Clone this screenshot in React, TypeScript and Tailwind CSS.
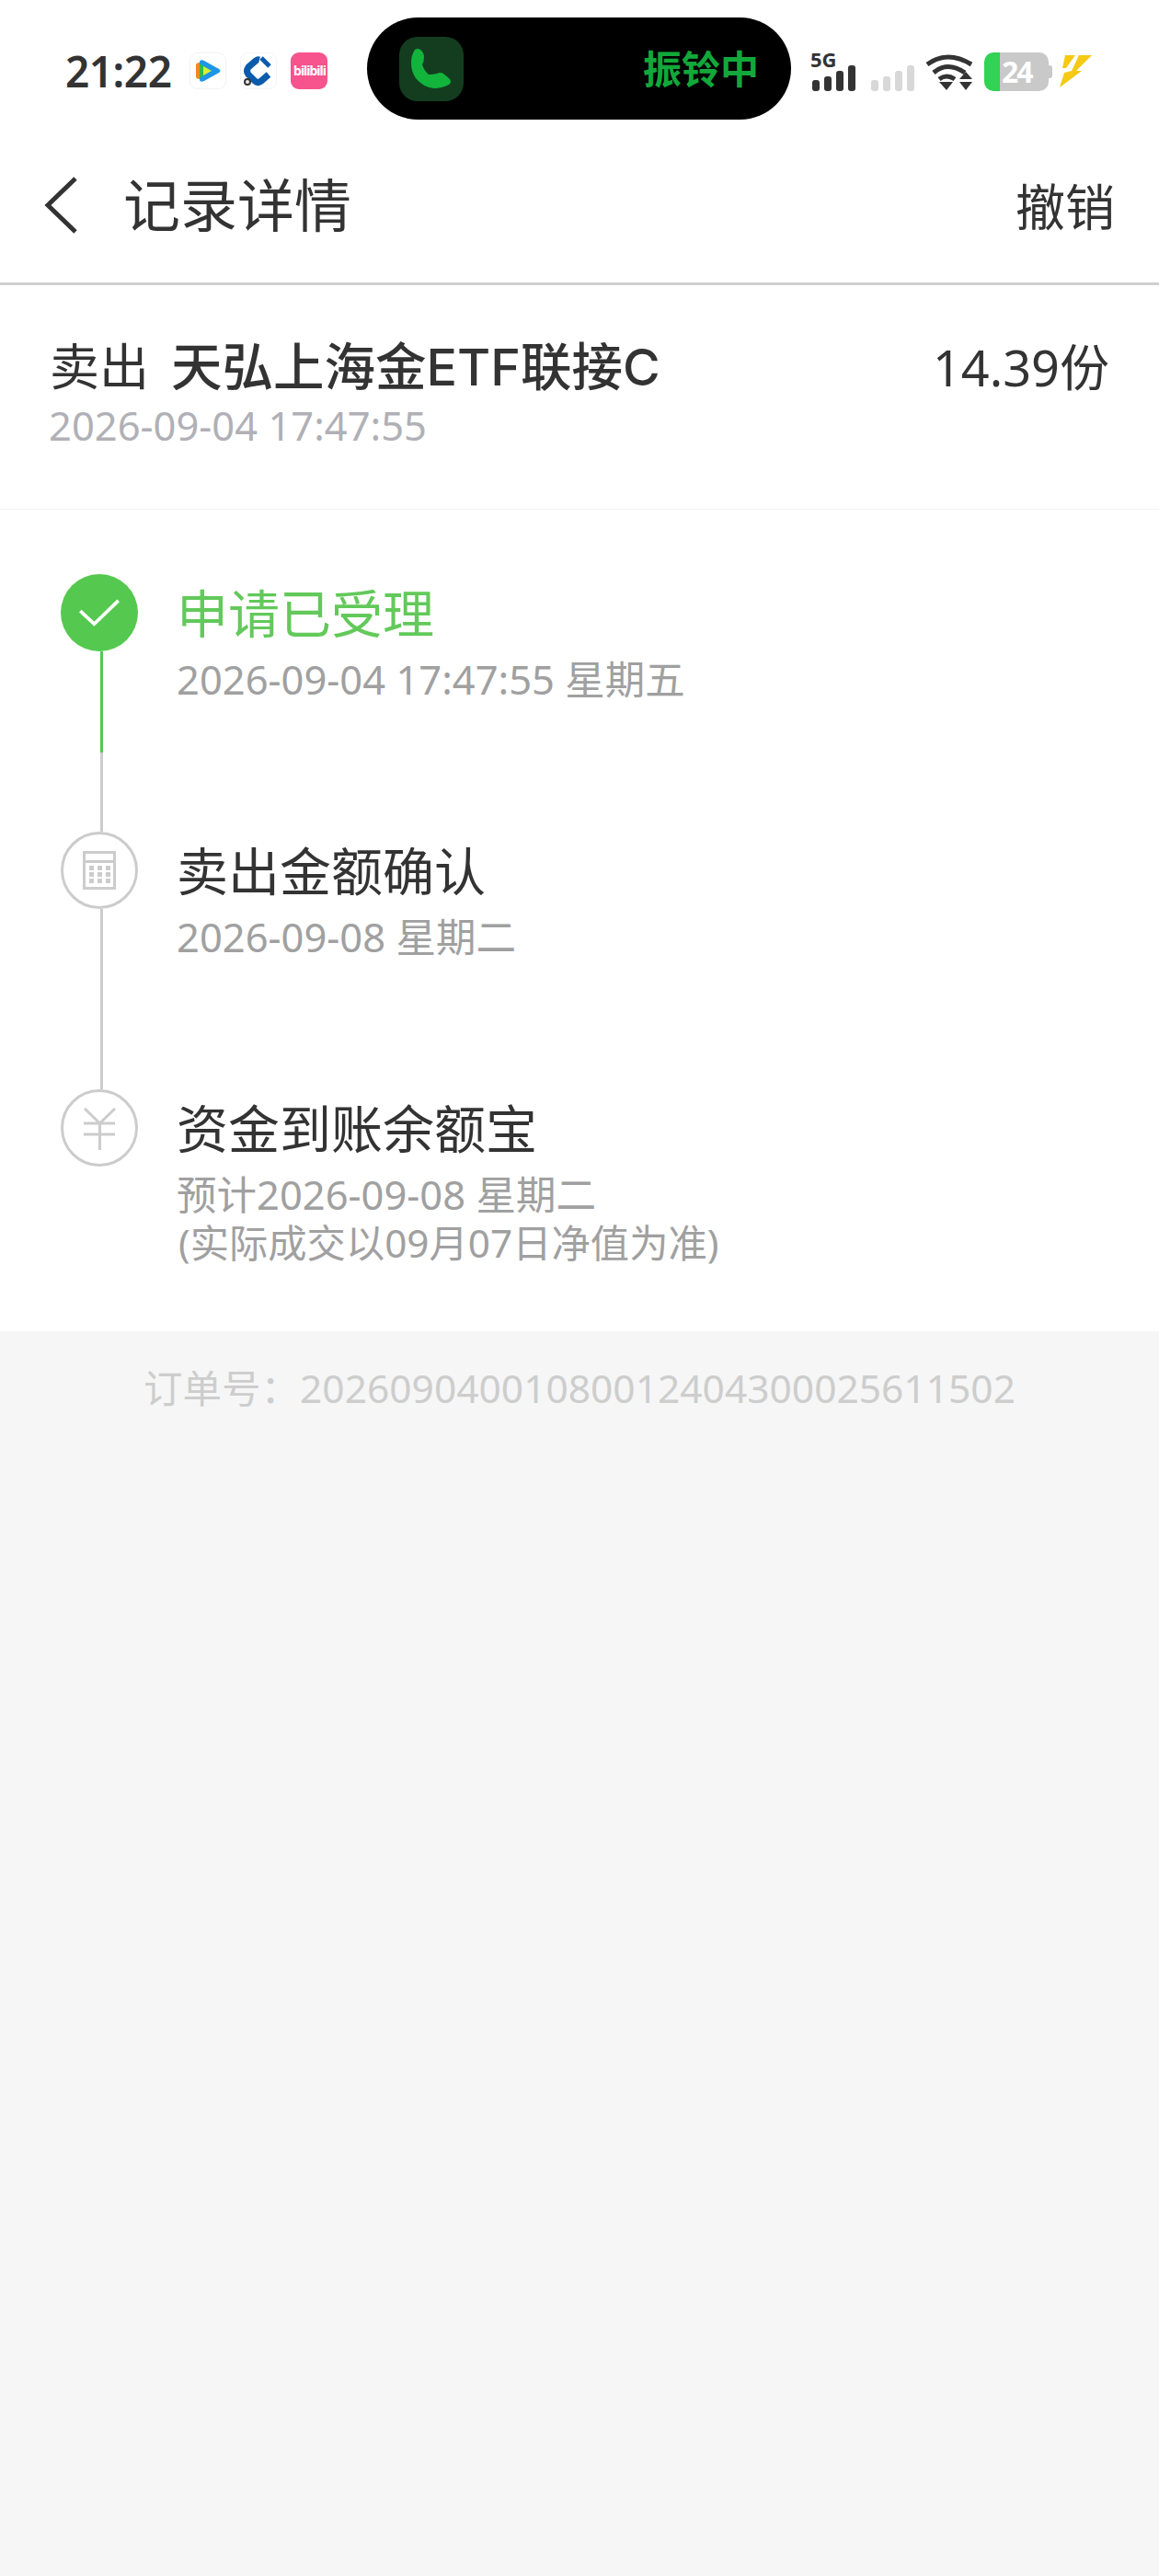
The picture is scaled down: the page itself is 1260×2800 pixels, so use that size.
import React from 'react';

const font = { fontFamily: '"Noto Sans", "Noto Sans CJK SC", sans-serif' };

const TencentVideo = () => (
  <svg viewBox="0 0 40 40" className="w-[40px] h-[40px]">
    <rect x="0.5" y="0.5" width="39" height="39" rx="8" fill="#fff" stroke="#f2f2f2" />
    <path d="M7 14 Q7 11 11 11 L16 11 L16 29 L11 29 Q7 29 7 26 Z" fill="#f08a1c" />
    <path d="M11 11 Q11 7 16 9 L32 18 Q35 20 32 22 L16 31 Q11 33 11 29 Z" fill="#1e96e8" />
    <path d="M11 12 L23 20 L11 28 Z" fill="#35b84b" />
    <path d="M15 15 L24 20 L15 25 Z" fill="#d8ee3c" />
  </svg>
);

const CcbLogo = () => (
  <svg viewBox="0 0 40 40" className="w-[40px] h-[40px]">
    <rect x="0.5" y="0.5" width="39" height="39" rx="8" fill="#fff" stroke="#f4f4f4" />
    <path d="M31 24 L23 31 Q19.5 34 16 31 L9 24 Q6 20 9 16 L17 9 Q19 7.5 21 8" fill="none" stroke="#0a5bab" strokeWidth="7" />
    <path d="M23 6 L32 15" fill="none" stroke="#0a5bab" strokeWidth="5" />
    <circle cx="8" cy="32" r="3" fill="#eee" stroke="#333" strokeWidth="2" />
  </svg>
);

const Bilibili = () => (
  <div className="w-[40px] h-[40px] rounded-[9px] bg-[#f7538d] flex items-center justify-center text-white text-[14px] font-bold leading-none tracking-[-1px]">
    bilibili
  </div>
);

const SignalBars = ({ color }: { color: string }) => (
  <svg viewBox="0 0 48 28" className="w-[48px] h-[28px]" fill={color}>
    <rect x="0" y="16" width="8" height="12" rx="3" />
    <rect x="13" y="12" width="8" height="16" rx="3" />
    <rect x="26" y="6" width="8" height="22" rx="3" />
    <rect x="39" y="0" width="8" height="28" rx="3" />
  </svg>
);

const Wifi = () => (
  <svg viewBox="0 0 53 41" className="w-[53px] h-[41px]" fill="none" stroke="#333" strokeWidth="5">
    <path d="M2 13 Q24 -3 50 13" />
    <path d="M9 22 Q24 9 43 22" />
    <path d="M15 29 Q23 23 32 29" />
    <path d="M15 32 L30 32 L23 41 Z" fill="#333" stroke="none" />
    <path d="M44 21 L51 29 L37 29 Z" fill="#333" stroke="none" />
    <path d="M37 32 L51 32 L44 41 Z" fill="#333" stroke="none" />
  </svg>
);

const Battery = () => (
  <div className="flex items-center">
    <div className="w-[70px] h-[42px] flex">
      <div className="w-[17px] bg-[#32d254] rounded-l-[10px]" />
      <div className="flex-1 bg-[#c9c9c9] rounded-r-[10px] text-left pl-[2px] text-white text-[32px] font-bold leading-[42px] tracking-[-2px]">24</div>
    </div>
    <div className="w-[4px] h-[14px] bg-[#c9c9c9] rounded-r-[3px]" />
  </div>
);

const Bolt = () => (
  <svg viewBox="0 0 35 35" className="w-[35px] h-[35px]" fill="#f6c915">
    <path d="M6 0 L17 0 L7 14 L3 14 Z" />
    <path d="M21 0 L35 0 L18 17 L24 17 L0 35 L5 19 L13 17 Z" />
  </svg>
);

const PhoneIcon = () => (
  <div className="w-[70px] h-[70px] rounded-[20px] bg-[#143d1f]">
    <svg viewBox="0 0 70 70" className="w-[70px] h-[70px]" fill="#12b43c">
      <path d="M17 14 Q20 12 23 14 Q27 17 27 22 Q27 27 25 30 Q27 37 32 41 Q37 41 41 40 Q45 38 48 40 L54 45 Q58 49 54 52 Q46 56 38 56 Q26 55 18 45 Q13 38 13 28 Q13 20 17 14 Z" />
    </svg>
  </div>
);

const CalcIcon = () => (
  <svg viewBox="0 0 36 42" className="w-[36px] h-[42px]" fill="#ccc">
    <path fillRule="evenodd" d="M0 0 H36 V42 H0 Z M3 3 V10 H33 V3 Z M3 13 V39 H33 V13 Z" />
    {[7, 16, 25].map(x =>
      [16, 23, 30].map(y => <rect key={`${x}-${y}`} x={x} y={y} width="5" height="5" />)
    )}
  </svg>
);

const YenIcon = () => (
  <svg viewBox="0 0 38 48" className="w-[38px] h-[48px]" fill="none" stroke="#ccc" strokeWidth="3">
    <path d="M3 3 L19.5 19 L36 3" />
    <path d="M2 19 H36" />
    <path d="M2 31 H36" />
    <path d="M19.5 19 V48" />
  </svg>
);

const steps = [
  {
    title: '申请已受理',
    lines: ['2026-09-04 17:47:55 星期五'],
    done: true,
  },
  {
    title: '卖出金额确认',
    lines: ['2026-09-08 星期二'],
    icon: <CalcIcon />,
  },
  {
    title: '资金到账余额宝',
    lines: ['预计2026-09-08 星期二', '(实际成交以09月07日净值为准)'],
    icon: <YenIcon />,
    last: true,
  },
];

export default function App() {
  return (
    <div className="w-[1260px] h-[2800px] bg-[#f6f6f6] flex flex-col" style={font}>
      <div className="bg-white">
        {/* status bar */}
        <div className="h-[150px] flex items-start pt-[19px] text-[#333]">
          <div className="w-[399px] h-[111px] flex items-center pl-[71px] pt-[4px] gap-[15px]">
            <span className="text-[46px] font-semibold leading-none tracking-[-0.5px] mr-[5px]">21:22</span>
            <TencentVideo />
            <CcbLogo />
            <Bilibili />
          </div>
          <div className="w-[461px] h-[111px] rounded-[56px] bg-black flex items-center justify-between pl-[35px] pr-[35px]">
            <PhoneIcon />
            <span className="text-[#12a83a] text-[42px] font-bold">振铃中</span>
          </div>
          <div className="flex-1 h-[111px] flex items-center pl-[21px] pt-[6px]">
            <div className="relative w-[66px] h-[42px] flex items-end">
              <span className="absolute -top-[4px] left-0 text-[22px] font-bold leading-none">5G</span>
              <div className="pl-[2px]"><SignalBars color="#333" /></div>
            </div>
            <div className="mt-[14px]"><SignalBars color="#d8d8d8" /></div>
            <div className="ml-[11px]"><Wifi /></div>
            <div className="ml-[11px]"><Battery /></div>
            <div className="ml-[8px]"><Bolt /></div>
          </div>
        </div>

        {/* title bar */}
        <div className="h-[160px] flex items-center pb-[11px] border-b-[3px] border-[#cfcfcf] pl-[46px] pr-[48px]">
          <svg viewBox="0 0 40 64" className="w-[40px] h-[64px]" fill="none" stroke="#333" strokeWidth="5">
            <path d="M36 3 L6 32 L36 61" />
          </svg>
          <span className="ml-[48px] text-[62px] text-[#333] leading-none">记录详情</span>
          <span className="ml-auto mt-[4px] text-[54px] text-[#333] leading-none">撤销</span>
        </div>

        {/* order summary */}
        <div className="h-[244px] px-[54px] pt-[53px] border-b border-[#f2f2f2]">
          <div className="flex items-center justify-between text-[#333] text-[54px] leading-[70px]">
            <div>卖出<span className="ml-[24px] text-[55.5px] font-medium font-['Inter','Noto_Sans_CJK_SC',sans-serif]">天弘上海金ETF联接C</span></div>
            <div>14.39份</div>
          </div>
          <div className="text-[43.5px] text-[#b0b0b6] leading-[58px] -ml-[1px] -mt-[1px]">2026-09-04 17:47:55</div>
        </div>

        {/* timeline */}
        <div className="h-[893px] pt-[70px] pl-[66px] flex flex-col">
          {steps.map(s => (
            <div key={s.title} className={`flex shrink-0 ${s.last ? 'h-[263px]' : 'h-[280px]'}`}>
              <div className="w-[84px] flex flex-col items-center shrink-0">
                {s.done ? (
                  <div className="w-[84px] h-[84px] shrink-0 rounded-full bg-[#55c84f] flex items-center justify-center">
                    <svg viewBox="0 0 48 34" className="w-[46px] h-[32px]" fill="none" stroke="#fff" strokeWidth="4">
                      <path d="M2 15 L18 30 L46 3" />
                    </svg>
                  </div>
                ) : (
                  <div className="w-[84px] h-[84px] shrink-0 rounded-full border-[3px] border-[#ccc] flex items-center justify-center">
                    {s.icon}
                  </div>
                )}
                {s.done && <div className="w-[3px] ml-[4px] h-[110px] bg-[#55c84f]" />}
                {!s.last && <div className="w-[3px] ml-[4px] flex-1 bg-[#ccc]" />}
              </div>
              <div className="ml-[42px]">
                <div className={`text-[56px] leading-[84px] ${s.done ? 'text-[#62c95a]' : 'text-[#333]'}`}>{s.title}</div>
                {s.lines.map((l, i) => (
                  <div key={l} className={`text-[#a0a0a0] leading-[54px] ${i === 0 ? 'mt-[3px] text-[43.5px]' : 'text-[42.3px] ml-[2px] -mt-[1px]'}`}>{l}</div>
                ))}
              </div>
            </div>
          ))}
        </div>
      </div>

      {/* order number */}
      <div className="text-center text-[42.5px] text-[#cdcdcd] pt-[34px] leading-[56px]">订单号：20260904001080012404300025611502</div>
    </div>
  );
}
